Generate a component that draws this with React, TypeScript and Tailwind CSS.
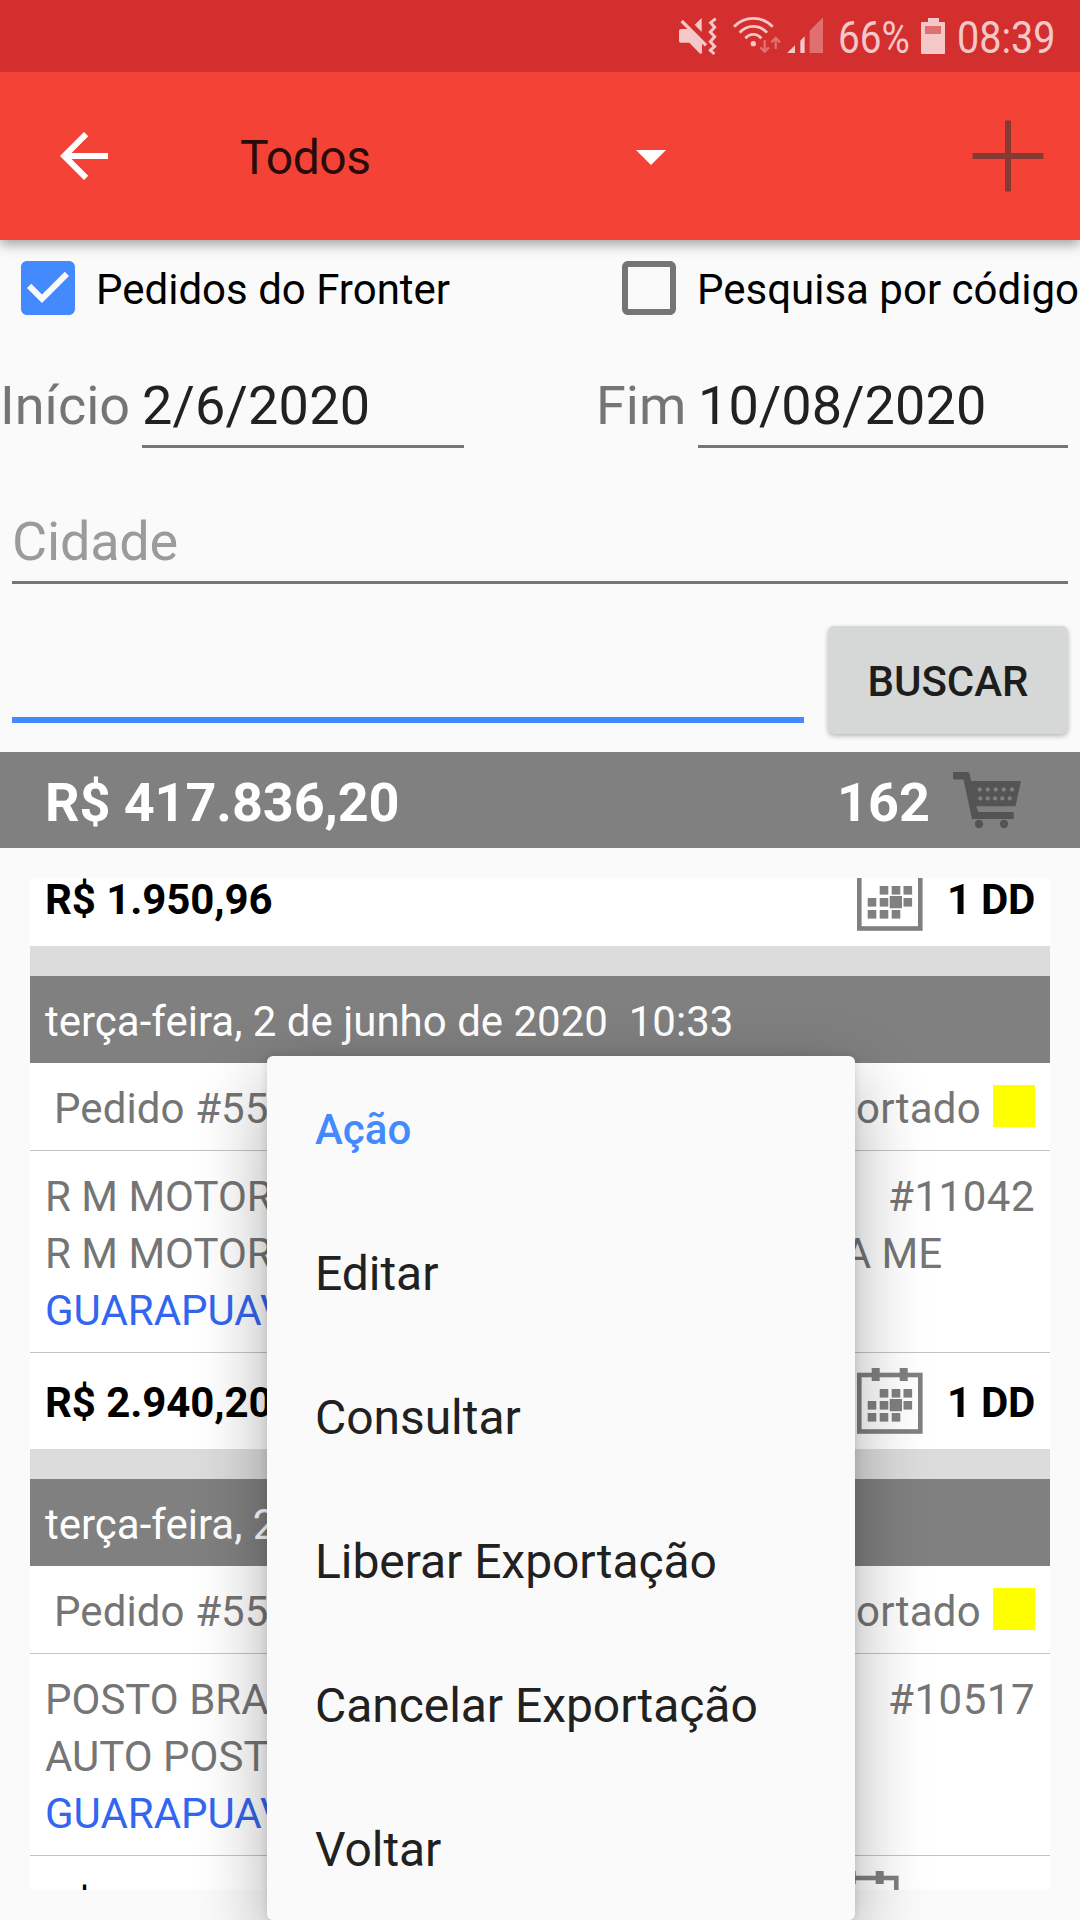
import type { ReactNode } from "react";

function StatusIcons() {
  return (
    <svg className="ml-[670px] h-[50px] w-[160px] shrink-0" viewBox="0 0 480 150" fill="#f4c7c8">
      <path d="M74 44l21-20v42z" />
      <path d="M32 57h22l42 42v29q-3 6-8 1L58 98H32q-5 0-5-5V62q0-5 5-5z" />
      <path d="M35 33l73 73" stroke="#f4c7c8" strokeWidth="10" fill="none" />
      <path d="M43 27l71 71" stroke="#d32f2f" strokeWidth="7" fill="none" />
      <path d="M137 26l-15 12 12 14-13 14 13 14-13 15 13 14-13 12 12 11" stroke="#f4c7c8" strokeWidth="9" fill="none" />
      <g stroke="#f4c7c8" strokeWidth="8.5" fill="none">
        <path d="M192 50Q216 25 250 25T308 50" />
        <path d="M209 68Q226 49 250 49T291 68" />
        <path d="M226 85Q236 73 250 73T274 85" />
      </g>
      <circle cx="250" cy="101" r="8" />
      <g stroke="#e06f70" strokeWidth="7" fill="none">
        <path d="M284 90v36M271 112l13 13 13-13" />
        <path d="M317 117V83M304 97l13-13 13 13" />
      </g>
      <path d="M351 129l24-23v23zM391 92l13-13v50h-13z" />
      <path d="M419 62l40-40v107h-40z" fill="#e06f70" />
    </svg>
  );
}

function Cart() {
  return (
    <svg className="h-[57px] w-[68px]" viewBox="0 0 68 57" fill="#545454">
      <path d="M1 0h13.5q1.500 0 2 1.500L18 9h50l-5.500 25.300H23.300l2 5.700h35.400v7H19L10.500 7.500H1q-1 0-1-1V1q0-1 1-1z" />
      <circle cx="26" cy="52" r="4.200" />
      <circle cx="51" cy="52" r="4.200" />
      <g fill="#808080">
        {[26.7, 34.7, 42.7, 50.7, 59].map((x) => (
          <circle key={x} cx={x} cy="17.400" r="2.100" />
        ))}
        {[27.3, 34.7, 42, 49.3, 56.7].map((x) => (
          <circle key={x} cx={x} cy="26.400" r="2.100" />
        ))}
      </g>
    </svg>
  );
}

const days = [
  [22.7, 21], [34.7, 21], [46.5, 21],
  [10.7, 33], [22.7, 33], [46.5, 33],
  [10.7, 45], [22.7, 45], [34.7, 45],
];

function Calendar() {
  return (
    <svg className="h-[66px] w-[66px] shrink-0" viewBox="0 0 66 66" fill="#808080">
      <rect x="2.300" y="7" width="61" height="56.500" fill="none" stroke="#808080" strokeWidth="4.600" />
      <path d="M14.700 0h8v13h-8zM42.700 0h8v13h-8zM32.700 31h12.300v12.300H32.700z" />
      {days.map(([x, y]) => (
        <rect key={`${x}-${y}`} x={x} y={y} width="8.600" height="8.600" />
      ))}
    </svg>
  );
}

function Footer({ price, term }: { price: string; term: string }) {
  return (
    <div className="flex h-24 items-center bg-white px-[15px] text-[42px] font-bold text-black">
      <span className="grow pt-[3px] tracking-[-0.1px]">{price}</span>
      <Calendar />
      <span className="ml-6 pt-[3px] tracking-[-0.3px]">{term}</span>
    </div>
  );
}

interface Order {
  date: string;
  code: string;
  name: string;
  company: string[];
  client: string;
  price: string;
  term: string;
}

const orders: Order[] = [
  {
    date: "terça-feira, 2 de junho de 2020  10:33",
    code: "Pedido #5541",
    name: "R M MOTORES",
    company: ["R M MOTORES", "LTDA ME"],
    client: "#11042",
    price: "R$ 2.940,20",
    term: "1 DD",
  },
  {
    date: "terça-feira, 2 de junho",
    code: "Pedido #5540",
    name: "POSTO BRASIL",
    company: ["AUTO POSTO"],
    client: "#10517",
    price: "R$ 185,66",
    term: "30 DD",
  },
];

function OrderCard({ order }: { order: Order }) {
  return (
    <section className="shrink-0 bg-white text-[42px] text-[#757575]">
      <header className="flex h-[87px] items-center whitespace-pre bg-[#808080] px-[15px] pt-[5px] text-white">
        {order.date}
      </header>
      <div className="flex h-[88px] items-center border-b border-[#c4c4c4] pl-6 pr-[15px]">
        <span className="grow pt-[5px] tracking-[0.1px]">{order.code}</span>
        <span className="pt-[5px] tracking-[0.25px]">Exportado</span>
        <span className="-mt-px ml-3 size-[42px] bg-[#ffff00]" />
      </div>
      <div className="h-[202px] border-b border-[#c4c4c4] px-[15px] pt-[17px] leading-[57px]">
        <div className="flex justify-between">
          <span>{order.name}</span>
          <span className="tracking-[0.5px]">{order.client}</span>
        </div>
        <div className="flex w-[897px] justify-between">
          {order.company.map((part) => (
            <span key={part}>{part}</span>
          ))}
        </div>
        <div className="text-[#3366f0]">GUARAPUAVA</div>
      </div>
      <Footer price={order.price} term={order.term} />
      <div className="h-[30px] bg-[#dcdcdc]" />
    </section>
  );
}

function Check({ checked, children }: { checked?: boolean; children: ReactNode }) {
  return (
    <label className="flex items-center whitespace-nowrap text-[42px] text-black">
      <svg className="mr-[21px] size-[54px]" viewBox="3 3 18 18">
        {checked ? (
          <path
            fill="#448aff"
            d="M19 3H5c-1.110 0-2 .9-2 2v14c0 1.100.89 2 2 2h14c1.110 0 2-.9 2-2V5c0-1.100-.89-2-2-2zm-9 14l-5-5 1.410-1.410L10 14.170l7.590-7.590L19 8l-9 9z"
          />
        ) : (
          <path
            fill="#757575"
            d="M19 5v14H5V5h14m0-2H5c-1.100 0-2 .9-2 2v14c0 1.100.9 2 2 2h14c1.100 0 2-.9 2-2V5c0-1.100-.9-2-2-2z"
          />
        )}
      </svg>
      <span className="pt-[3px]">{children}</span>
    </label>
  );
}

const actions = ["Editar", "Consultar", "Liberar Exportação", "Cancelar Exportação", "Voltar"];

export default function App() {
  return (
    <div className="relative flex h-[1920px] w-[1080px] flex-col overflow-hidden bg-[#fafafa] font-[Roboto,sans-serif] leading-[1.172]">
      <div className="z-20 flex h-[72px] shrink-0 items-start bg-[#d32f2f] text-[45px] text-[#f4c7c8]">
        <div className="flex w-[830px] pt-2.5">
          <StatusIcons />
        </div>
        <span className="ml-2 mt-3 w-[83px] origin-left scale-x-[0.86]">66%</span>
        <svg className="mt-[18px] h-9 w-6 shrink-0" viewBox="0 0 24 36">
          <path d="M7 0h11v4h5q1 0 1 1v30q0 1-1 1H1q-1 0-1-1V5q0-1 1-1h6z" fill="#f4c7c8" />
          <path d="M4 8h16v8H4z" fill="#e06f70" />
        </svg>
        <span className="ml-3 mt-3 origin-left scale-x-[0.88]">08:39</span>
      </div>

      <div className="z-10 flex h-[168px] shrink-0 items-center bg-[#f44336] shadow-[0_4px_12px_rgba(0,0,0,0.38)]">
        <svg className="ml-12 size-[72px]" viewBox="0 0 24 24" fill="#fff">
          <path d="M20 11H7.830l5.590-5.590L12 4l-8 8 8 8 1.410-1.410L7.830 13H20v-2z" />
        </svg>
        <span className="ml-[120px] w-[396px] pt-[5px] text-5xl leading-[1.172] tracking-[-0.5px] text-[#290b09]">Todos</span>
        <svg className="mt-[3px] h-[15px] w-[30px]" viewBox="0 0 30 15" fill="#fff">
          <path d="M0 0h30L15 15z" />
        </svg>
        <svg className="ml-[306px] size-[72px]" viewBox="0 0 72 72" stroke="#873a34" strokeWidth="6">
          <path d="M36 .5v71M.5 36h71" />
        </svg>
      </div>

      <div className="flex h-24 shrink-0 items-center pl-[21px]">
        <div className="w-[601px]">
          <Check checked>Pedidos do Fronter</Check>
        </div>
        <Check>Pesquisa por código</Check>
      </div>

      <div className="flex h-[112px] shrink-0 items-end text-[54px] text-[#757575]">
        <span className="w-[142px] pb-[11px]">Início</span>
        <span className="w-[322px] border-b-[3px] border-[#757575] pb-2 tracking-[0.2px] text-[#212121]">2/6/2020</span>
        <span className="ml-[132px] w-[102px] pb-[11px]">Fim</span>
        <span className="w-[370px] border-b-[3px] border-[#757575] pb-2 tracking-[0.1px] text-[#212121]">10/08/2020</span>
      </div>
      <div className="mx-3 flex h-[136px] shrink-0 items-end border-b-[3px] border-[#757575] pb-2 text-[54px] tracking-[-0.2px] text-[#9b9b9b]">
        Cidade
      </div>
      <div className="flex h-[168px] shrink-0 pl-3">
        <div className="h-[139px] w-[792px] border-b-[6px] border-[#448aff]" />
        <div className="ml-6 mt-[42px] flex h-[108px] w-[240px] items-center justify-center rounded-md bg-[#d6d8d7] pt-[3px] text-[42px] font-medium text-[#1d1d1d] shadow-[0_2px_5px_rgba(0,0,0,0.28)]">
          BUSCAR
        </div>
      </div>

      <div className="flex h-24 shrink-0 items-center bg-[#808080] pl-[45px] text-[54px] font-bold text-white">
        <span className="grow pt-1.5 tracking-[-0.1px]">R$ 417.836,20</span>
        <span className="mr-[23px] pt-1.5">162</span>
        <div className="mr-[59px]">
          <Cart />
        </div>
      </div>

      <div className="mx-[30px] mt-[30px] flex h-[1012px] shrink-0 flex-col overflow-hidden bg-white">
        <div className="-mt-7 shrink-0">
          <Footer price="R$ 1.950,96" term="1 DD" />
          <div className="h-[30px] bg-[#dcdcdc]" />
        </div>
        {orders.map((order) => (
          <OrderCard key={order.client} order={order} />
        ))}
      </div>

      <div className="absolute left-[267px] top-[1056px] z-20 h-[864px] w-[588px] rounded-md bg-[#fafafa] pl-12 shadow-[0_24px_72px_rgba(0,0,0,0.32),0_0_8px_rgba(0,0,0,0.12)]">
        <div className="flex h-[146px] items-center pt-0.5 text-[42px] font-medium text-[#448aff]">Ação</div>
        {actions.map((action) => (
          <div key={action} className="flex h-36 items-center text-5xl leading-[1.172] tracking-[-0.05px] text-[#212121]">
            {action}
          </div>
        ))}
      </div>
    </div>
  );
}
